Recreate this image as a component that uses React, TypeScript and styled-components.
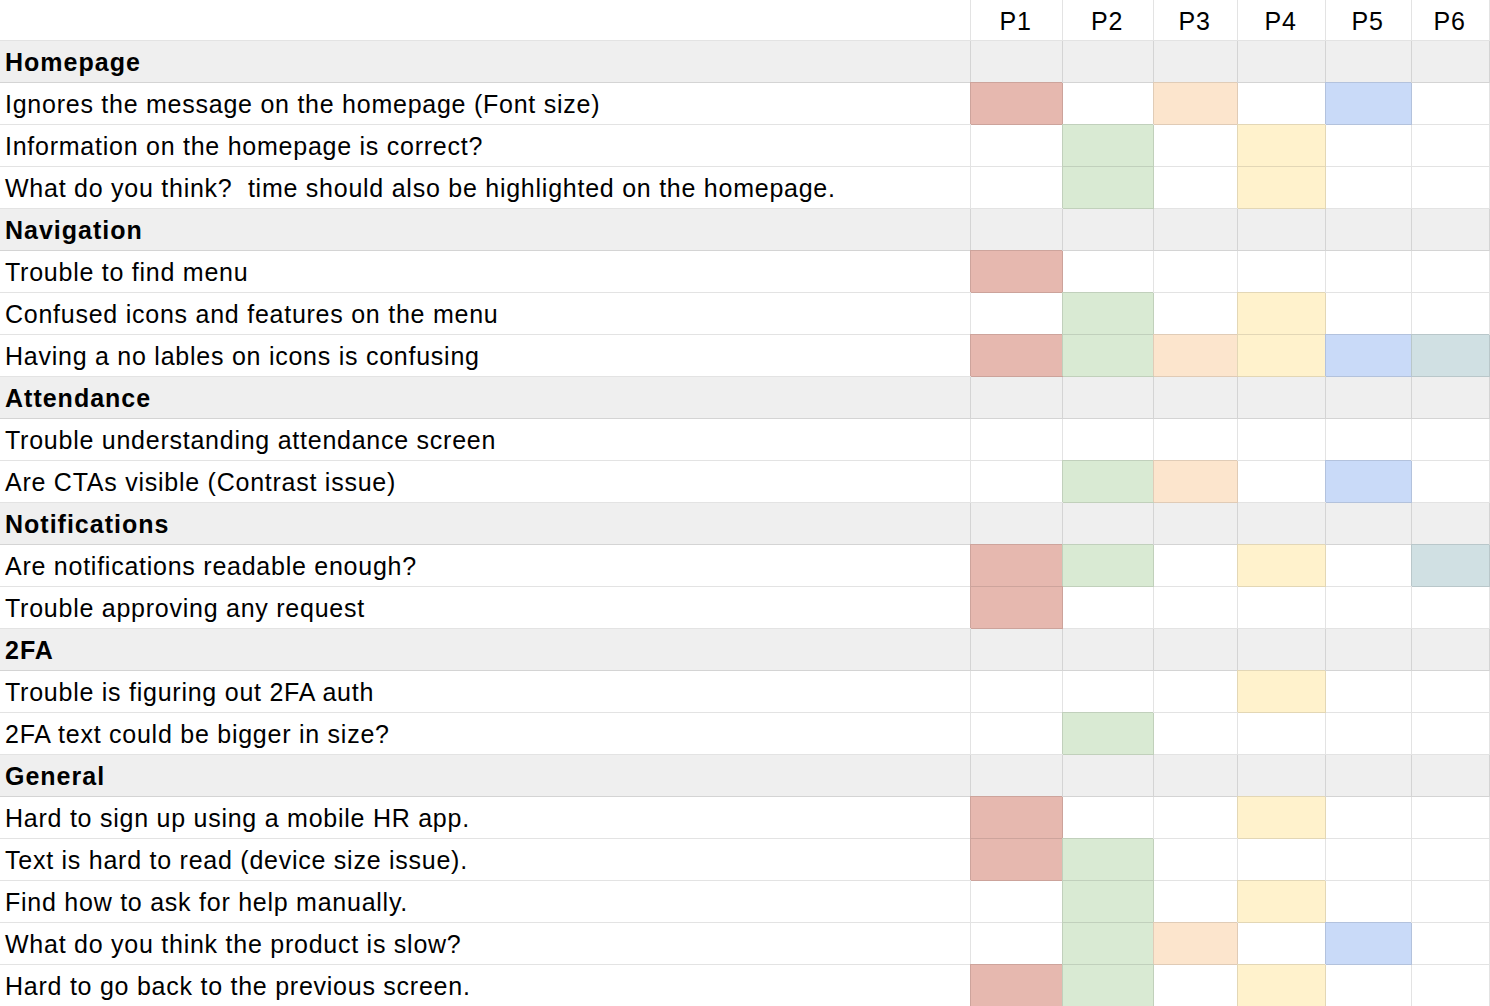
import React from "react";
import styled, { createGlobalStyle, css } from "styled-components";

const GlobalStyle = createGlobalStyle`
  html, body {
    margin: 0;
    padding: 0;
    background: #ffffff;
  }
  body {
    font-family: "Liberation Sans", Arial, sans-serif;
    color: #000;
    overflow: hidden;
  }
`;

type Tone = "red" | "green" | "orange" | "yellow" | "blue" | "teal";

const FILL: Record<Tone, { bg: string; edge: string }> = {
  red: { bg: "#e6b8af", edge: "#cda49c" },
  green: { bg: "#d9ead3", edge: "#c1d0bc" },
  orange: { bg: "#fce5cd", edge: "#e0ccb7" },
  yellow: { bg: "#fff2cc", edge: "#e3d7b6" },
  blue: { bg: "#c9daf8", edge: "#b3c2dd" },
  teal: { bg: "#d0e0e3", edge: "#b9c7ca" },
};

const COLUMN_TONES: Tone[] = ["red", "green", "orange", "yellow", "blue", "teal"];

const Sheet = styled.div`
  width: 1490px;
  height: 1006px;
  overflow: hidden;
  display: flex;
  flex-direction: column;
`;

const Row = styled.div<{ $section?: boolean; $header?: boolean }>`
  display: grid;
  grid-template-columns: 971px 92px 91px 84px 88px 86px 78px;
  height: ${(p) => (p.$header ? "41px" : "42px")};
  flex: none;
  background: ${(p) => (p.$section ? "#efefef" : "#ffffff")};
`;

const Cell = styled.div<{ $tone?: Tone }>`
  box-sizing: border-box;
  border-right: 1px solid rgba(0, 0, 0, 0.11);
  border-bottom: 1px solid rgba(0, 0, 0, 0.11);
  ${(p) =>
    p.$tone &&
    css`
      background: ${FILL[p.$tone].bg};
      box-shadow: -1px -1px 0 0 ${FILL[p.$tone].edge};
    `}
`;

const LabelCell = styled(Cell)<{ $bold?: boolean }>`
  display: flex;
  align-items: center;
  padding-left: 5px;
  padding-top: 1px;
  font-size: 25px;
  font-weight: ${(p) => (p.$bold ? 700 : 400)};
  letter-spacing: ${(p) => (p.$bold ? "1px" : "0.75px")};
  white-space: pre;
  overflow: hidden;
`;

const HeadCell = styled(Cell)`
  display: flex;
  align-items: center;
  justify-content: center;
  font-size: 25px;
  letter-spacing: 0.6px;
  padding-top: 2px;
  padding-right: 2px;
`;

type Item = { label: string; marks: number[] };
type Section = { title: string; items: Item[] };

const SECTIONS: Section[] = [
  {
    title: "Homepage",
    items: [
      { label: "Ignores the message on the homepage (Font size)", marks: [0, 2, 4] },
      { label: "Information on the homepage is correct?", marks: [1, 3] },
      {
        label: "What do you think?  time should also be highlighted on the homepage.",
        marks: [1, 3],
      },
    ],
  },
  {
    title: "Navigation",
    items: [
      { label: "Trouble to find menu", marks: [0] },
      { label: "Confused icons and features on the menu", marks: [1, 3] },
      { label: "Having a no lables on icons is confusing", marks: [0, 1, 2, 3, 4, 5] },
    ],
  },
  {
    title: "Attendance",
    items: [
      { label: "Trouble understanding attendance screen", marks: [] },
      { label: "Are CTAs visible (Contrast issue)", marks: [1, 2, 4] },
    ],
  },
  {
    title: "Notifications",
    items: [
      { label: "Are notifications readable enough?", marks: [0, 1, 3, 5] },
      { label: "Trouble approving any request", marks: [0] },
    ],
  },
  {
    title: "2FA",
    items: [
      { label: "Trouble is figuring out 2FA auth", marks: [3] },
      { label: "2FA text could be bigger in size?", marks: [1] },
    ],
  },
  {
    title: "General",
    items: [
      { label: "Hard to sign up using a mobile HR app.", marks: [0, 3] },
      { label: "Text is hard to read (device size issue).", marks: [0, 1] },
      { label: "Find how to ask for help manually.", marks: [1, 3] },
      { label: "What do you think the product is slow?", marks: [1, 2, 4] },
      { label: "Hard to go back to the previous screen.", marks: [0, 1, 3] },
    ],
  },
];

const PARTICIPANTS = ["P1", "P2", "P3", "P4", "P5", "P6"];

export default function App() {
  return (
    <>
      <GlobalStyle />
      <Sheet>
        <Row $header>
          <Cell />
          {PARTICIPANTS.map((p) => (
            <HeadCell key={p}>{p}</HeadCell>
          ))}
        </Row>
        {SECTIONS.map((section) => (
          <React.Fragment key={section.title}>
            <Row $section>
              <LabelCell $bold>{section.title}</LabelCell>
              {PARTICIPANTS.map((p) => (
                <Cell key={p} />
              ))}
            </Row>
            {section.items.map((item) => (
              <Row key={item.label}>
                <LabelCell>{item.label}</LabelCell>
                {PARTICIPANTS.map((p, i) => (
                  <Cell
                    key={p}
                    $tone={item.marks.includes(i) ? COLUMN_TONES[i] : undefined}
                  />
                ))}
              </Row>
            ))}
          </React.Fragment>
        ))}
      </Sheet>
    </>
  );
}
